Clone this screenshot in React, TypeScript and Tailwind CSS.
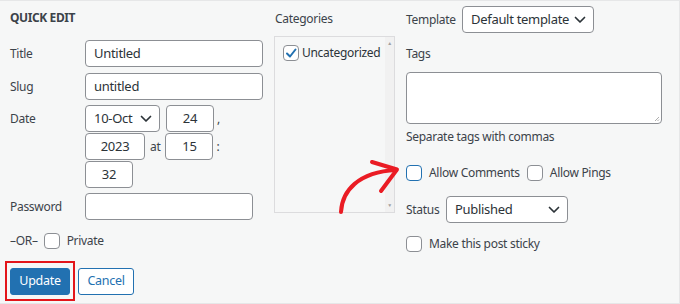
import React from 'react';

const font = { fontFamily: '"Noto Sans", "Open Sans", sans-serif' };

function Chevron({ className = '' }: { className?: string }) {
  return (
    <svg width="12" height="8" viewBox="0 0 12 8" className={className}>
      <path d="M1.5 1.5 L6 6 L10.5 1.5" fill="none" stroke="#2c3338" strokeWidth="1.7" strokeLinecap="round" strokeLinejoin="round" />
    </svg>
  );
}

function Box({ checked = false, focus = false }: { checked?: boolean; focus?: boolean }) {
  return (
    <span
      className={`w-[16px] h-[16px] rounded-[4px] bg-white flex items-center justify-center shrink-0 ${
        focus ? 'border-[1.5px] border-[#2271b1]' : 'border border-[#8c8f94]'
      }`}
    >
      {checked && (
        <svg width="12" height="12" viewBox="0 0 12 12">
          <path d="M2 6.5 L5 9.5 L10.5 2.5" fill="none" stroke="#2271b1" strokeWidth="2" strokeLinecap="round" strokeLinejoin="round" />
        </svg>
      )}
    </span>
  );
}

function Field({ w, value = '', center = false }: { w: string; value?: string; center?: boolean }) {
  return (
    <div
      className={`${w} shrink-0 h-[27px] bg-white border border-[#8c8f94] rounded-[4px] flex items-center text-[13px] tracking-[-0.3px] text-[#2c3338] ${
        center ? 'justify-center' : 'px-[8px]'
      }`}
    >
      {value}
    </div>
  );
}

function Select({ w, value }: { w: string; value: string }) {
  return (
    <div className={`${w} shrink-0 h-[27px] bg-white border border-[#8c8f94] rounded-[4px] flex items-center pl-[8px] justify-between whitespace-nowrap text-[13px] tracking-[-0.3px] text-[#2c3338]`}>
      <span>{value}</span>
      <Chevron className="mr-[7px]" />
    </div>
  );
}

export default function App() {
  return (
    <div style={font} className="relative w-[680px] h-[304px] bg-[#f6f7f7] border-t border-r border-b border-[#e6e7e8] text-[12px] tracking-[-0.3px] text-[#3c434a] flex overflow-hidden">
      {/* left column */}
      <div className="w-[264px] ml-[10px] flex flex-col pt-[8px]">
        <div className="h-[18px] leading-[18px] font-bold text-[12px] tracking-[-0.4px] text-[#3c434a]">QUICK EDIT</div>

        <div className="flex items-center mt-[13px]">
          <span className="w-[75px]">Title</span>
          <Field w="w-[178px]" value="Untitled" />
        </div>
        <div className="flex items-center mt-[6px]">
          <span className="w-[75px]">Slug</span>
          <Field w="w-[178px]" value="untitled" />
        </div>

        <div className="flex mt-[5px]">
          <span className="w-[75px] h-[27px] flex items-center">Date</span>
          <div className="flex flex-col gap-[1px]">
            <div className="flex items-center">
              <Select w="w-[75px]" value="10-Oct" />
              <span className="ml-[6px]"><Field w="w-[48px]" value="24" center /></span>
              <span className="ml-[3px]">,</span>
            </div>
            <div className="flex items-center">
              <Field w="w-[60px]" value="2023" center />
              <span className="ml-[5px] mr-[5px]">at</span>
              <Field w="w-[48px]" value="15" center />
              <span className="ml-[3px]">:</span>
            </div>
            <div className="flex items-center">
              <Field w="w-[48px]" value="32" center />
            </div>
          </div>
        </div>

        <div className="flex items-center mt-[5px]">
          <span className="w-[75px]">Password</span>
          <Field w="w-[168px]" />
        </div>

        <div className="flex items-center mt-[13px] h-[16px]">
          <span>–OR–</span>
          <span className="ml-[6px]"><Box /></span>
          <span className="ml-[7px]">Private</span>
        </div>

        <div className="flex items-center mt-[12px] -ml-[5px]">
          <div className="border-2 border-[#e3151a] pt-[5px] pb-[4px] px-[3px]">
            <button className="w-[60px] h-[27px] rounded-[3px] bg-[#2271b1] border border-[#2271b1] text-white text-[12.5px]">Update</button>
          </div>
          <button className="ml-[3px] w-[56px] h-[27px] rounded-[3px] bg-white border border-[#2271b1] text-[#2271b1] text-[12.5px]">Cancel</button>
        </div>
      </div>

      {/* categories column */}
      <div className="w-[121px] shrink-0 flex flex-col pt-[9px]">
        <div className="h-[18px] leading-[18px] pl-[1px]">Categories</div>
        <div className="mt-[8px] h-[177px] border border-[#dcdcde] flex">
          <div className="flex-1 pl-[8px] pt-[7px]">
            <div className="flex items-center">
              <Box checked />
              <span className="ml-[3px] text-[12px] text-[#2c3338]">Uncategorized</span>
            </div>
          </div>
          <div className="w-[9px] bg-[#f1f1f1] flex flex-col justify-between items-center py-[4px] text-[5px] text-[#a0a0a0] leading-none">
            <span>▲</span>
            <span>▼</span>
          </div>
        </div>
      </div>

      {/* right column */}
      <div className="ml-[11px] w-[258px] shrink-0 flex flex-col pt-[5px]">
        <div className="flex items-center">
          <span className="w-[56px]">Template</span>
          <Select w="w-[132px]" value="Default template" />
        </div>
        <div className="mt-[13px] h-[16px] leading-[16px]">Tags</div>
        <div className="mt-[10px] w-[256px] h-[52px] bg-white border border-[#8c8f94] rounded-[4px] relative">
          <svg width="6" height="6" viewBox="0 0 6 6" className="absolute right-[1px] bottom-[1px]">
            <path d="M5 1 L1 5 M5 3.5 L3.5 5" stroke="#999" strokeWidth="0.8" />
          </svg>
        </div>
        <div className="mt-[5px] h-[16px] leading-[16px]">Separate tags with commas</div>
        <div className="mt-[20px] flex items-center h-[16px]">
          <Box focus />
          <span className="ml-[7px]">Allow Comments</span>
          <span className="ml-[7px]"><Box /></span>
          <span className="ml-[7px]">Allow Pings</span>
        </div>
        <div className="mt-[15px] flex items-center">
          <span className="w-[40px]">Status</span>
          <Select w="w-[122px]" value="Published" />
        </div>
        <div className="mt-[13px] flex items-center h-[16px]">
          <Box />
          <span className="ml-[7px]">Make this post sticky</span>
        </div>
      </div>

      {/* annotation arrow */}
      <svg className="absolute left-0 top-0 pointer-events-none" width="680" height="304">
        <path d="M341 211 C342 190, 358 171, 396 169" fill="none" stroke="#ea1c24" strokeWidth="4" strokeLinecap="round" />
        <path d="M372 161 L397 168.5 L381 190" fill="none" stroke="#ea1c24" strokeWidth="4" strokeLinecap="round" strokeLinejoin="round" />
      </svg>
    </div>
  );
}
